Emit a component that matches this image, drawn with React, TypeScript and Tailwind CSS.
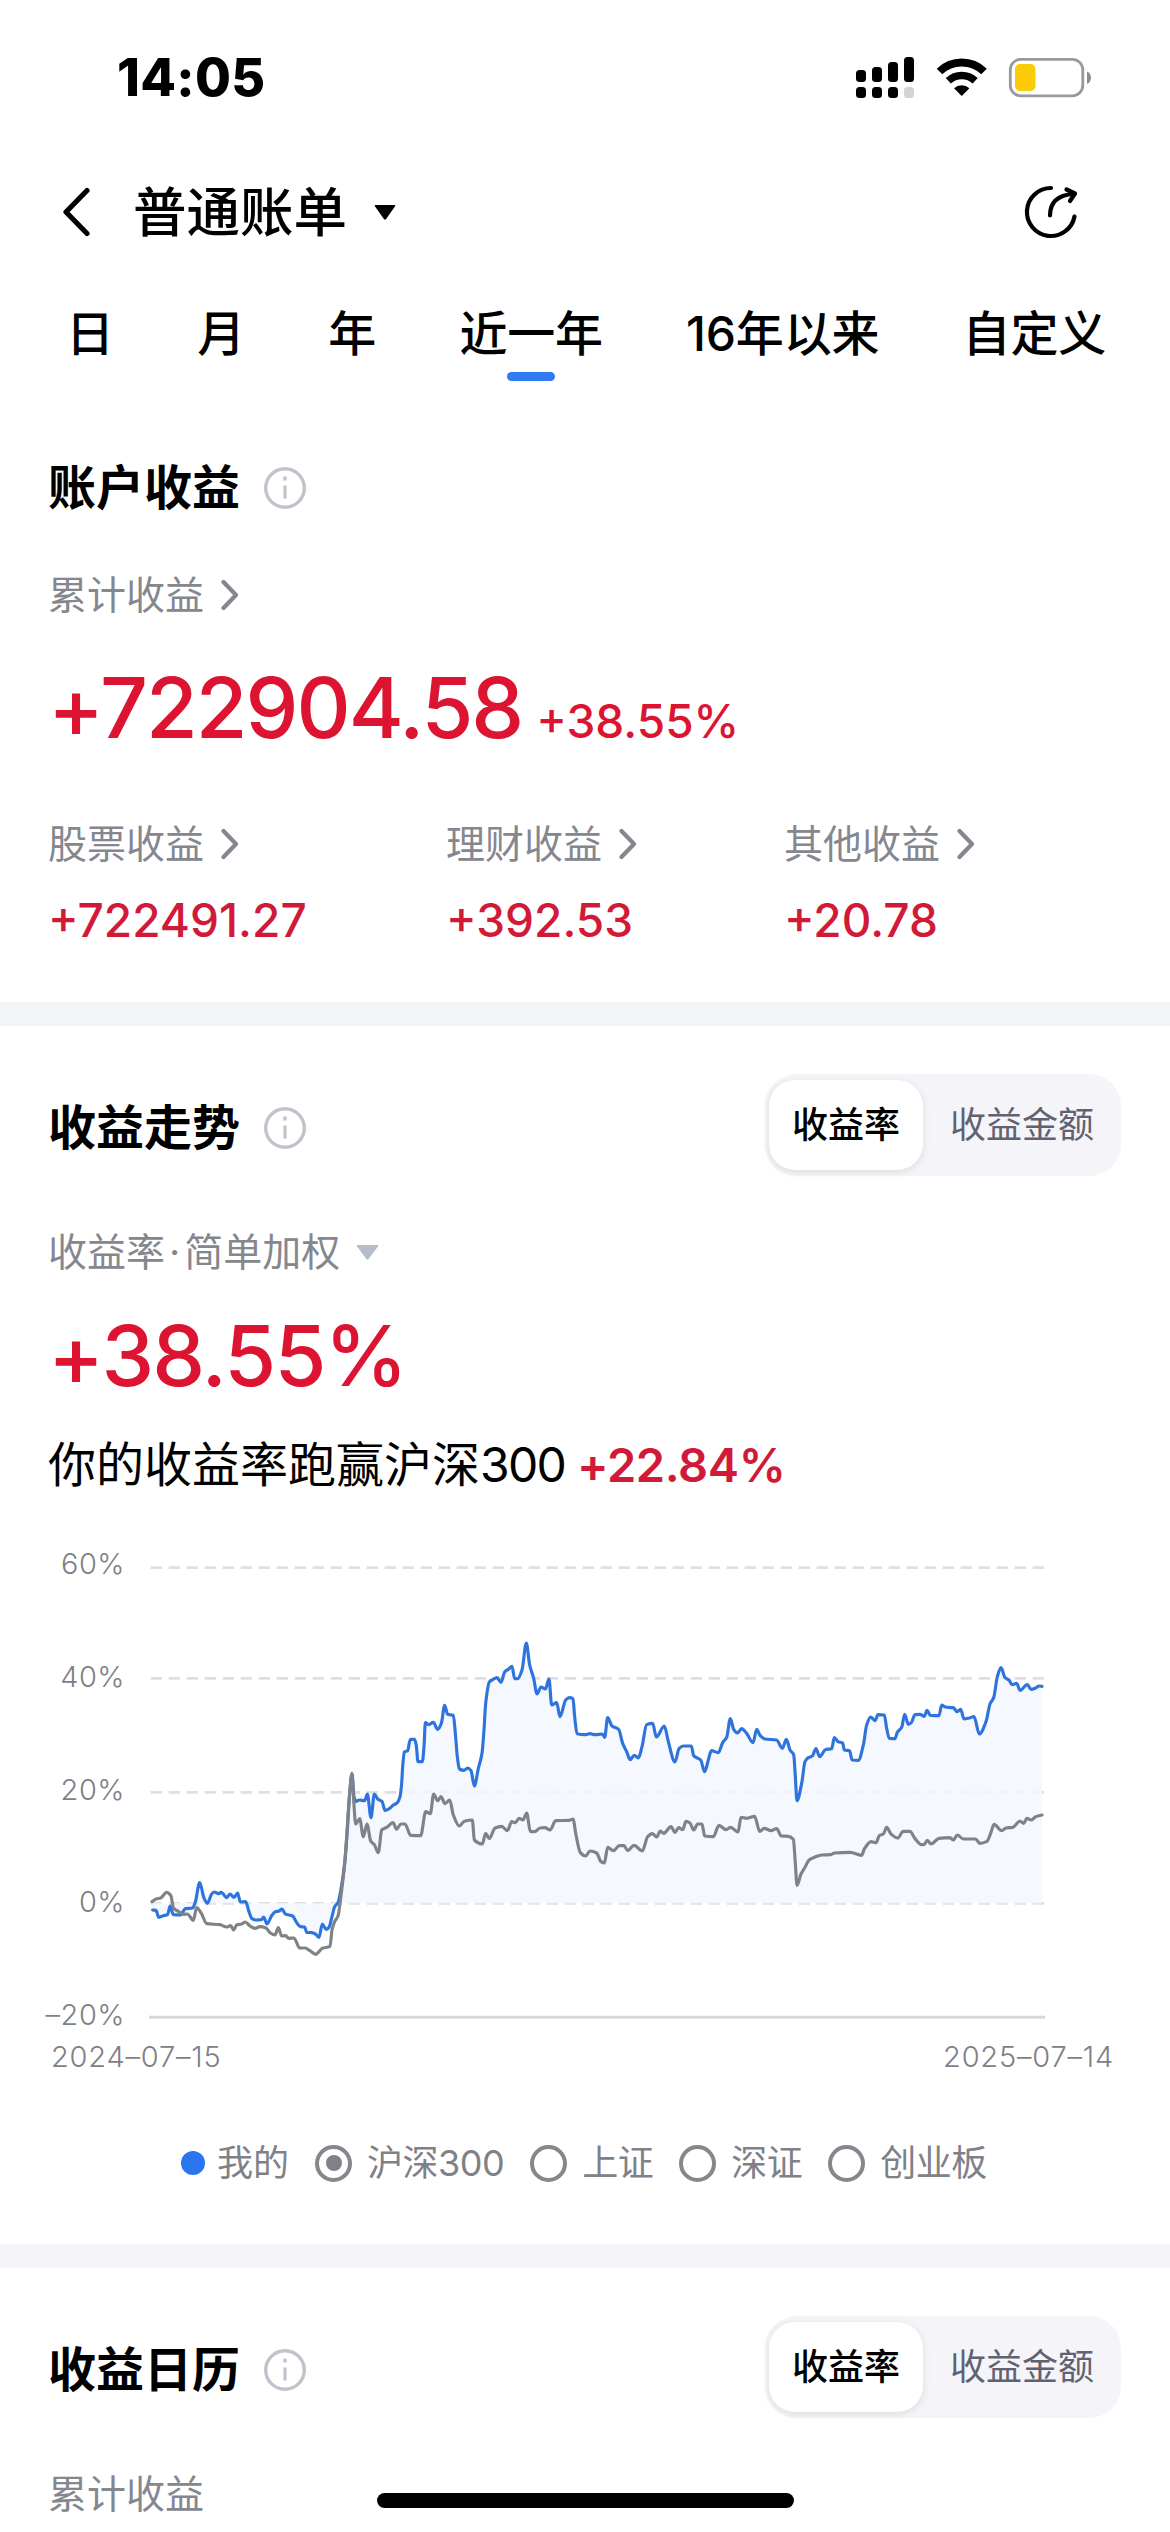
// ============================================================
// Account bill — yearly earnings overview, trend and calendar
// ============================================================

const TABS = ['日', '月', '年', '近一年', '16年以来', '自定义'];
const ACTIVE_TAB = '近一年';

const BREAKDOWN = [
  { label: '股票收益', value: '+722491.27' },
  { label: '理财收益', value: '+392.53' },
  { label: '其他收益', value: '+20.78' },
];

const Y_LABELS = ['60%', '40%', '20%', '0%', '–20%'];

const BENCHMARKS = [
  { label: '沪深300', selected: true },
  { label: '上证', selected: false },
  { label: '深证', selected: false },
  { label: '创业板', selected: false },
];

type Point = [number, number];

// Chart space is 2760 x 1440, zero line at y = 1090
const ZERO_Y = 1090;
const GRID_Y = [83, 415, 757, 1090];

const MINE: Point[] = [
  [68, 1110], [78, 1111], [86, 1132], [100, 1127], [113, 1124], [120, 1098], [130, 1124], [152, 1125], [166, 1106],
  [188, 1104], [196, 1086], [209, 1028], [222, 1074], [232, 1090], [245, 1062], [253, 1056], [266, 1061], [273, 1057],
  [279, 1061], [289, 1073], [300, 1062], [312, 1072], [323, 1059], [331, 1086], [347, 1085], [357, 1115], [366, 1136],
  [378, 1140], [395, 1139], [401, 1131], [411, 1152], [425, 1127], [436, 1115], [447, 1113], [456, 1107], [466, 1122],
  [488, 1128], [500, 1148], [511, 1160], [524, 1161], [530, 1177], [545, 1178], [556, 1182], [567, 1192], [577, 1152],
  [588, 1168], [597, 1162], [606, 1130], [614, 1100], [624, 1088], [636, 1030], [645, 960], [652, 870], [659, 760],
  [666, 702], [672, 770], [678, 784], [688, 780], [704, 782], [712, 762], [723, 833], [733, 762], [744, 778],
  [756, 784], [765, 811], [778, 806], [790, 795], [800, 790], [810, 770], [815, 730], [818, 680], [823, 636],
  [833, 632], [841, 598], [854, 598], [859, 618], [864, 665], [877, 665], [882, 620], [886, 548], [896, 554],
  [910, 547], [923, 568], [934, 550], [944, 496], [953, 523], [970, 526], [976, 580], [982, 650], [988, 687],
  [1002, 691], [1013, 684], [1023, 692], [1033, 738], [1045, 685], [1056, 640], [1062, 570], [1067, 490], [1078, 426],
  [1088, 419], [1101, 413], [1113, 427], [1124, 396], [1135, 388], [1146, 379], [1154, 416], [1163, 416], [1176, 390],
  [1189, 309], [1199, 375], [1211, 415], [1221, 462], [1233, 441], [1246, 447], [1257, 417], [1265, 495], [1280, 488],
  [1290, 530], [1307, 480], [1318, 473], [1329, 476], [1334, 530], [1341, 581], [1365, 584], [1380, 581], [1395, 584],
  [1417, 582], [1424, 592], [1433, 533], [1446, 558], [1466, 568], [1478, 610], [1490, 635], [1500, 659], [1513, 646],
  [1525, 654], [1536, 620], [1550, 554], [1568, 550], [1579, 591], [1603, 558], [1615, 605], [1635, 666], [1647, 626],
  [1660, 618], [1684, 618], [1691, 647], [1712, 660], [1724, 695], [1735, 660], [1744, 632], [1765, 638], [1778, 608],
  [1790, 592], [1801, 536], [1811, 568], [1822, 579], [1835, 566], [1850, 580], [1869, 608], [1880, 568], [1890, 586],
  [1905, 597], [1940, 600], [1957, 625], [1969, 598], [1980, 630], [1991, 644], [1996, 710], [2001, 782], [2015, 730],
  [2025, 665], [2035, 653], [2047, 648], [2058, 626], [2069, 650], [2086, 629], [2105, 626], [2113, 593], [2124, 605],
  [2138, 609], [2143, 630], [2159, 632], [2166, 660], [2185, 661], [2200, 615], [2210, 555], [2222, 531], [2235, 542],
  [2244, 524], [2263, 525], [2270, 565], [2278, 595], [2295, 596], [2302, 577], [2315, 562], [2324, 523], [2335, 553],
  [2344, 548], [2355, 524], [2370, 523], [2383, 529], [2391, 511], [2401, 526], [2427, 527], [2435, 495], [2446, 501],
  [2470, 503], [2481, 515], [2492, 508], [2502, 537], [2518, 534], [2532, 530], [2548, 582], [2568, 545], [2580, 492],
  [2591, 473], [2602, 410], [2613, 383], [2625, 413], [2637, 420], [2646, 434], [2660, 430], [2670, 451], [2692, 434],
  [2703, 448], [2717, 444], [2727, 438], [2736, 439],
];

const CSI300: Point[] = [
  [66, 1085], [78, 1077], [92, 1074], [110, 1057], [122, 1066], [131, 1105], [145, 1114], [160, 1123], [172, 1122],
  [190, 1141], [200, 1103], [214, 1120], [230, 1151], [270, 1154], [290, 1161], [302, 1157], [311, 1170], [320, 1155],
  [335, 1152], [346, 1146], [360, 1158], [375, 1165], [390, 1160], [408, 1164], [420, 1178], [435, 1185], [445, 1163],
  [455, 1188], [467, 1187], [476, 1195], [492, 1194], [509, 1224], [525, 1224], [540, 1232], [557, 1243], [577, 1225],
  [600, 1219], [606, 1170], [614, 1145], [624, 1128], [632, 1075], [645, 960], [652, 860], [659, 760], [666, 700],
  [671, 780], [677, 852], [689, 836], [700, 890], [711, 852], [722, 903], [733, 914], [745, 938], [755, 870],
  [770, 862], [789, 848], [800, 868], [812, 852], [825, 852], [842, 886], [872, 887], [887, 815], [901, 821],
  [911, 762], [923, 782], [933, 770], [945, 791], [959, 780], [970, 825], [988, 858], [1003, 844], [1027, 840],
  [1033, 900], [1057, 912], [1067, 880], [1078, 896], [1095, 864], [1115, 859], [1132, 872], [1145, 845], [1156, 848],
  [1167, 835], [1179, 840], [1190, 819], [1201, 874], [1214, 875], [1230, 864], [1245, 863], [1260, 870], [1277, 842],
  [1318, 841], [1329, 837], [1338, 885], [1351, 938], [1367, 948], [1380, 933], [1400, 939], [1413, 965], [1423, 969],
  [1433, 922], [1450, 932], [1468, 917], [1482, 917], [1493, 932], [1512, 916], [1537, 933], [1553, 890], [1567, 881],
  [1580, 891], [1591, 873], [1601, 880], [1623, 860], [1635, 877], [1646, 863], [1658, 869], [1668, 844], [1680, 849],
  [1691, 870], [1703, 852], [1716, 852], [1724, 888], [1750, 890], [1767, 856], [1788, 869], [1802, 862], [1824, 876],
  [1833, 832], [1850, 835], [1874, 829], [1889, 874], [1903, 865], [1923, 872], [1940, 866], [1954, 888], [1975, 889],
  [1990, 898], [1996, 970], [2001, 1036], [2013, 1002], [2025, 982], [2037, 960], [2055, 951], [2075, 945],
  [2103, 944], [2113, 939], [2160, 937], [2195, 946], [2203, 927], [2223, 905], [2238, 908], [2248, 887], [2260, 882],
  [2270, 862], [2283, 882], [2303, 894], [2320, 874], [2340, 874], [2355, 896], [2375, 914], [2383, 913], [2392, 901],
  [2403, 912], [2427, 895], [2460, 893], [2470, 900], [2482, 885], [2500, 897], [2537, 897], [2549, 910], [2570, 905],
  [2582, 880], [2592, 853], [2615, 872], [2628, 864], [2648, 862], [2670, 843], [2681, 850], [2691, 835], [2703, 840],
  [2717, 830], [2736, 825],
];

// Monotone cubic, so the curve never overshoots a data point
function smoothPath(pts: Point[]) {
  const slope = (i: number) => (pts[i + 1][1] - pts[i][1]) / (pts[i + 1][0] - pts[i][0]);
  const tangents = pts.map((_, i) => {
    if (i === 0) return slope(0);
    if (i === pts.length - 1) return slope(i - 1);
    const a = slope(i - 1);
    const b = slope(i);
    return a * b <= 0 ? 0 : (2 * a * b) / (a + b);
  });

  let d = `M${pts[0][0]},${pts[0][1]}`;
  for (let i = 1; i < pts.length; i++) {
    const [x0, y0] = pts[i - 1];
    const [x1, y1] = pts[i];
    const h = (x1 - x0) / 3;
    d += `C${x0 + h},${y0 + tangents[i - 1] * h} ${x1 - h},${y1 - tangents[i] * h} ${x1},${y1}`;
  }
  return d;
}

// ─── Icons ───

function StatusIcons() {
  return (
    <svg width="236" height="42" viewBox="856 57 236 42" fill="none">
      <g fill="#000">
        <rect x="856" y="70" width="10" height="12" rx="3.5" />
        <rect x="872" y="67" width="10" height="15" rx="3.5" />
        <rect x="888" y="62" width="10" height="20" rx="3.5" />
        <rect x="904" y="57" width="10" height="25" rx="3.5" />
        <rect x="856" y="87" width="10" height="11" rx="3.5" />
        <rect x="872" y="87" width="10" height="11" rx="3.5" />
        <rect x="888" y="87" width="10" height="11" rx="3.5" />
      </g>
      <rect x="904" y="87" width="10" height="11" rx="3.5" fill="#d4d4d4" />
      <path d="M939.5 71.5a32 32 0 0 1 44.5 0" stroke="#000" strokeWidth="8" />
      <path d="M948.3 80.8a19.5 19.5 0 0 1 26.9 0" stroke="#000" strokeWidth="7.5" />
      <path d="M961.7 96l-7.7-7.8a11.5 11.5 0 0 1 15.4 0z" fill="#000" />
      <rect x="1010.3" y="59.3" width="72.5" height="36.5" rx="10.5" stroke="#999" strokeWidth="2.8" />
      <rect x="1015" y="64" width="20.5" height="27" rx="5" fill="#fbcb0a" />
      <path d="M1087 71.5c5.300 2 5.300 10.500 0 12.500z" fill="#8c8c8c" />
    </svg>
  );
}

function BackIcon() {
  return (
    <svg width="28" height="50" viewBox="0 0 28 50" fill="none">
      <path d="M25 3.500L4 25l21 21.500" stroke="#000" strokeWidth="5.200" strokeLinecap="round" strokeLinejoin="round" />
    </svg>
  );
}

function ShareIcon() {
  return (
    <svg width="56" height="56" viewBox="1022 185 56 56" fill="none" stroke="#000" strokeWidth="4.200" strokeLinecap="round">
      <path d="M1051 189a24 24 0 1 0 23.500 28.500" />
      <path d="M1050 216.500c0-13 8-20.500 23.500-21.500" />
      <path d="M1066.500 190.500l8.500 4-5 7.500" strokeLinejoin="round" />
    </svg>
  );
}

function Chevron() {
  return (
    <svg width="18" height="32" viewBox="0 0 18 32" fill="none">
      <path d="M2.500 3l12.500 13-12.500 13" stroke="#85878f" strokeWidth="4.200" strokeLinecap="round" strokeLinejoin="round" />
    </svg>
  );
}

function InfoIcon() {
  return (
    <svg width="42" height="42" viewBox="0 0 42 42" fill="none" stroke="#c1c2cc">
      <circle cx="21" cy="21" r="19.300" strokeWidth="3.400" />
      <path d="M21 18.500v13" strokeWidth="3.200" />
      <path d="M21 9.500v4" strokeWidth="3.400" />
    </svg>
  );
}

// ─── Shared pieces ───

function SectionTitle({ children }: { children: string }) {
  return (
    <div className="flex h-16 items-center gap-6">
      <h2 className="text-[48px] leading-16 font-bold">{children}</h2>
      <InfoIcon />
    </div>
  );
}

function SectionHeader({ title }: { title: string }) {
  return (
    <div className="flex items-center justify-between pr-[49px] pl-12">
      <div className="pt-1.5">
        <SectionTitle>{title}</SectionTitle>
      </div>
      <ModeSwitch />
    </div>
  );
}

function ModeSwitch() {
  return (
    <div className="flex h-[102px] w-[356px] items-center rounded-[32px] bg-[#f4f4f9] pl-1">
      <button className="h-[90px] w-[154px] rounded-[26px] bg-white text-[36px] font-medium shadow-[0_2px_8px_rgba(0,0,0,0.1)]">
        收益率
      </button>
      <button className="flex-1 text-[36px] text-[#5f6270]">收益金额</button>
    </div>
  );
}

function TrendChart() {
  const mine = smoothPath(MINE);
  const last = MINE[MINE.length - 1];

  return (
    <svg width="920" height="480" viewBox="0 0 2760 1440" fill="none" strokeLinejoin="round">
      {GRID_Y.map((y) => (
        <path key={y} d={`M62 ${y}H2742`} stroke="#dfdfe2" strokeWidth="8" strokeDasharray="34 20" />
      ))}
      <path d="M57 1432H2745" stroke="#d8d8da" strokeWidth="9" />
      <path d={`${mine}L${last[0]} ${ZERO_Y}H68Z`} fill="#f3f7fe" fillOpacity="0.85" />
      <path d={mine} stroke="#2f74dd" strokeWidth="9.500" strokeLinecap="round" />
      <path d={smoothPath(CSI300)} stroke="#7f8287" strokeWidth="9.500" strokeLinecap="round" />
    </svg>
  );
}

function Divider() {
  return <div className="h-6 bg-[#f4f5f9]" />;
}

export default function App() {
  return (
    <div className="relative h-[2532px] w-[1170px] overflow-hidden bg-white font-['Inter','Noto_Sans_CJK_SC',sans-serif] text-black">
      {/* ═══ Status bar ═══ */}
      <div className="flex h-[156px] items-center justify-between pr-[78px] pl-[117px]">
        <span className="text-[52px] font-extrabold tracking-[0.3px]">14:05</span>
        <StatusIcons />
      </div>

      {/* ═══ Nav bar ═══ */}
      <header className="flex h-28 items-center pr-[92px] pl-[62px]">
        <BackIcon />
        <h1 className="ml-[43px] pt-[3px] text-[53.5px] font-medium">普通账单</h1>
        <svg className="ml-[27px]" width="22" height="15" viewBox="0 0 22 15">
          <path d="M1.500 0h19q1.500 0 .6 1.300l-9 12.700q-1.100 1.300-2.200 0l-9-12.700q-.9-1.300.6-1.300z" fill="#000" />
        </svg>
        <span className="ml-auto">
          <ShareIcon />
        </span>
      </header>

      {/* ═══ Period tabs ═══ */}
      <nav className="flex h-[132px] justify-between pr-16 pl-[66px] pt-[30px]">
        {TABS.map((tab) => (
          <button key={tab} className="flex flex-col items-center">
            <span className="text-[48px] leading-[72px] font-medium tracking-[-0.2px]">{tab}</span>
            {tab === ACTIVE_TAB && <span className="mt-[2px] h-[9px] w-12 rounded-full bg-[#2f7bf2]" />}
          </button>
        ))}
      </nav>

      {/* ═══ Account earnings ═══ */}
      <section className="px-12 pt-14 pb-[54px]">
        <SectionTitle>账户收益</SectionTitle>
        <div className="mt-[51px] flex h-12 items-center gap-[17px] text-[39px] text-[#85878f]">
          累计收益
          <Chevron />
        </div>
        <div className="mt-[41px] flex h-24 items-baseline gap-[14px] text-[#dc1432]">
          <span className="text-[84px] leading-24 font-medium tracking-[-2px]">+722904.58</span>
          <span className="text-[46px] font-medium">+38.55%</span>
        </div>
        <div className="mt-16 grid grid-cols-[398px_338px_1fr]">
          {BREAKDOWN.map((item) => (
            <div key={item.label}>
              <div className="flex h-12 items-center gap-[17px] text-[39px] text-[#85878f]">
                {item.label}
                <Chevron />
              </div>
              <p className="mt-6 text-[46px] leading-14 font-medium text-[#d01a38]">{item.value}</p>
            </div>
          ))}
        </div>
      </section>

      <Divider />

      {/* ═══ Earnings trend ═══ */}
      <section className="pt-12 pb-[57px]">
        <SectionHeader title="收益走势" />
        <div className="mt-[52px] flex h-12 items-center gap-4 pl-12 text-[39px] text-[#85878f]">
          <span>
            收益率<span className="mx-1">·</span>简单加权
          </span>
          <svg width="23" height="15" viewBox="0 0 23 15">
            <path d="M1.500 0h20q1.500 0 .6 1.300l-9.500 12.700q-1.100 1.300-2.200 0L.9 1.300q-.9-1.300.6-1.300z" fill="#b6bcc8" />
          </svg>
        </div>
        <p className="mt-8 pl-12 text-[84px] leading-24 font-medium tracking-[-1.8px] text-[#dc1432]">+38.55%</p>
        <p className="mt-[29px] pl-12 text-[48px] leading-16 whitespace-pre">
          你的收益率跑赢沪深<span className="tracking-[-1.7px]">300 </span>
          <span className="text-[47px] font-semibold tracking-[-0.4px] text-[#d01a38]">+22.84%</span>
        </p>

        <div className="mt-[43px] flex h-[495px]">
          <div className="flex w-[130px] flex-col justify-between pt-1 pr-[5px] text-right text-[29px] leading-10 font-light tracking-[0.5px] text-[#7f8087]">
            {Y_LABELS.map((label) => (
              <span key={label}>{label}</span>
            ))}
          </div>
          <TrendChart />
        </div>
        <div className="mt-[2px] flex justify-between pr-[56px] pl-[51px] text-[29px] leading-10 font-light tracking-[0.8px] text-[#7f8087]">
          <span>2024–07–15</span>
          <span>2025–07–14</span>
        </div>

        <div className="mt-[62px] flex h-12 items-center pl-[181px] text-[36px] text-[#7f8188]">
          <span className="size-6 rounded-full bg-[#2a75f0]" />
          <span className="ml-3">我的</span>
          {BENCHMARKS.map((item) => (
            <span key={item.label} className="flex items-center">
              <span className="ml-[26px] flex size-[37px] items-center justify-center rounded-full border-4 border-[#85878d]">
                {item.selected && <span className="size-4 rounded-full bg-[#7f8188]" />}
              </span>
              <span className="ml-[15px] tracking-[-0.5px]">{item.label}</span>
            </span>
          ))}
        </div>
      </section>

      <Divider />

      {/* ═══ Earnings calendar ═══ */}
      <section className="pt-12">
        <SectionHeader title="收益日历" />
        <div className="mt-[52px] flex h-12 items-center pl-12 text-[39px] text-[#85878f]">累计收益</div>
      </section>

      {/* Home indicator */}
      <div className="absolute bottom-6 left-[377px] h-[15px] w-[417px] rounded-full bg-black" />
    </div>
  );
}
